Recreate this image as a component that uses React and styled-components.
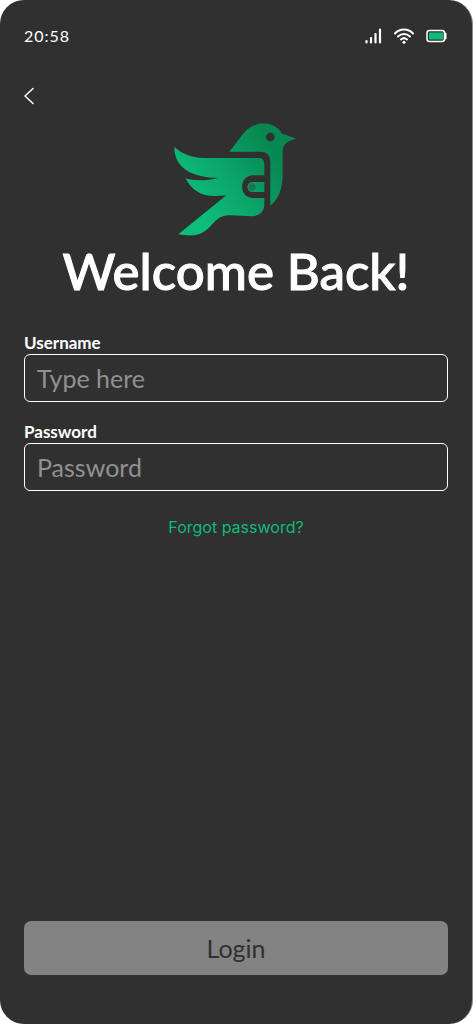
import React from "react";
import styled, { createGlobalStyle } from "styled-components";

const GlobalStyle = createGlobalStyle`
  * { box-sizing: border-box; }
  body { margin: 0; background: #ffffff; }
  body, button, input { font-family: Lato, "Liberation Sans", sans-serif; }
`;

const Screen = styled.main`
  display: flex;
  flex-direction: column;
  min-height: 100vh;
  padding: 24px 24px 49px;
  background: #303030;
  border-right: 1px solid #8c8c8c;
  border-radius: 24px;
  color: #ffffff;
`;

const StatusBar = styled.header`
  display: flex;
  align-items: center;
  justify-content: space-between;
  height: 24px;
`;

const Time = styled.time`
  font-size: 16px;
  line-height: 24px;
  letter-spacing: 1px;
`;

const StatusIcons = styled.div`
  display: flex;
  align-items: center;
  gap: 12px;

  svg { display: block; }
`;

const BackButton = styled.button`
  align-self: flex-start;
  width: 24px;
  height: 24px;
  margin-top: 36px;
  padding: 0;
  border: 0;
  background: none;
  color: inherit;
  cursor: pointer;

  svg { display: block; }
`;

const Brand = styled.div`
  display: flex;
  flex-direction: column;
  align-items: center;
  margin-top: 7px;
`;

const Title = styled.h1`
  margin: 0;
  font-size: 51px;
  font-weight: 500;
  line-height: 52px;
  white-space: nowrap;
  -webkit-text-stroke: 1px currentColor;
`;

const Form = styled.form`
  display: flex;
  flex: 1;
  flex-direction: column;
  margin-top: 34px;
`;

const Field = styled.div`
  display: flex;
  flex-direction: column;
  margin-bottom: 18px;
`;

const Label = styled.label`
  font-size: 17px;
  font-weight: 700;
  line-height: 23px;
`;

const Input = styled.input`
  width: 100%;
  height: 48px;
  padding: 0 12px;
  border: 1px solid #ffffff;
  border-radius: 6px;
  outline: 0;
  background: transparent;
  color: #ffffff;
  font-size: 25px;

  &::placeholder { color: #919191; opacity: 1; }
  &:focus { border-color: #0dbb78; }
`;

const ForgotLink = styled.a`
  align-self: center;
  margin-top: 6px;
  color: #0dbb78;
  font-family: Inter, "Liberation Sans", sans-serif;
  font-size: 16px;
  line-height: 24px;
  text-decoration: none;
`;

const LoginButton = styled.button`
  width: 100%;
  height: 54px;
  margin-top: auto;
  border: 0;
  border-radius: 7px;
  background: #838383;
  color: #303030;
  font-size: 25px;
  cursor: pointer;
`;

function SignalIcon() {
  return (
    <svg width="17" height="18" viewBox="0 0 17 18" fill="none" stroke="#fff" strokeWidth="2.200" strokeLinecap="round" aria-hidden="true">
      <path d="M1.500 14v1.500M6 11v4.500M10.500 7v8.500M15 2.500v13" />
    </svg>
  );
}

function WifiIcon() {
  return (
    <svg width="20" height="18" viewBox="0 0 20 18" fill="none" stroke="#fff" strokeWidth="2" strokeLinecap="round" aria-hidden="true">
      <path d="M1 6.500C6 1.300 14 1.300 19 6.500M4 9.500c3.500-3.300 8.500-3.300 12 0M7 12.400c1.800-1.500 4.200-1.500 6 0" />
      <circle cx="10" cy="15.300" r="1.500" fill="#fff" stroke="none" />
    </svg>
  );
}

function BatteryIcon() {
  return (
    <svg width="22" height="14" viewBox="0 0 22 14" aria-hidden="true">
      <rect x="1" y="1.500" width="17.500" height="11" rx="2.500" fill="none" stroke="#fff" strokeWidth="1.500" />
      <rect x="3" y="3.500" width="14" height="7" rx="0.500" fill="#0dbb78" />
      <path d="M18 3.500h1.200q1.300 0 1.300 1.300v4.400q0 1.300-1.300 1.300H18z" fill="#fff" />
    </svg>
  );
}

function BirdLogo() {
  return (
    <svg width="142" height="130" viewBox="0 0 426 390" role="img" aria-label="Bird wallet">
      <defs>
        <linearGradient id="feather" gradientUnits="userSpaceOnUse" x1="90" y1="270" x2="325" y2="115">
          <stop offset="0" stopColor="#0dbd79" />
          <stop offset="0.500" stopColor="#0ba469" />
          <stop offset="1" stopColor="#078851" />
        </linearGradient>
      </defs>
      <g fill="url(#feather)">
        <path d="M193 110C215 86 231 54 253 39C285 17 332 22 351 56C365 60 379 64 393 71C370 77 354 84 353 108V178C353 222 341 252 316 272V141C316 121 306 110 286 110Z" />
        <path d="M28 96C50 116 77 128 119 129H281Q298 129 298 146V181H265C220 181 220 249 265 249H298V268C298 290 284 303 262 304C241 304 219 301 198 301C176 301 163 306 148 321C119 354 102 368 40 358L184 241C116 250 84 233 62 190C90 199 126 197 159 189C87 187 28 164 28 96Z" />
        <path d="M263 201H298V231H263C242 231 242 201 263 201Z" />
      </g>
      <circle cx="316" cy="66" r="13" fill="#303030" />
      <circle cx="261" cy="216" r="11" fill="#21704e" />
    </svg>
  );
}

export default function App() {
  return (
    <>
      <GlobalStyle />
      <Screen>
        <StatusBar>
          <Time>20:58</Time>
          <StatusIcons>
            <SignalIcon />
            <WifiIcon />
            <BatteryIcon />
          </StatusIcons>
        </StatusBar>
        <BackButton type="button" aria-label="Back">
          <svg width="12" height="24" viewBox="0 0 12 24" fill="none" stroke="currentColor" strokeWidth="1.500" strokeLinecap="round" strokeLinejoin="round" aria-hidden="true">
            <path d="M9 4.500L1 12L9 19.500" />
          </svg>
        </BackButton>
        <Brand>
          <BirdLogo />
          <Title>Welcome Back!</Title>
        </Brand>
        <Form onSubmit={(event) => event.preventDefault()}>
          <Field>
            <Label htmlFor="username">Username</Label>
            <Input id="username" type="text" placeholder="Type here" autoComplete="username" />
          </Field>
          <Field>
            <Label htmlFor="password">Password</Label>
            <Input id="password" type="password" placeholder="Password" autoComplete="current-password" />
          </Field>
          <ForgotLink href="#forgot-password">Forgot password?</ForgotLink>
          <LoginButton type="submit">Login</LoginButton>
        </Form>
      </Screen>
    </>
  );
}
